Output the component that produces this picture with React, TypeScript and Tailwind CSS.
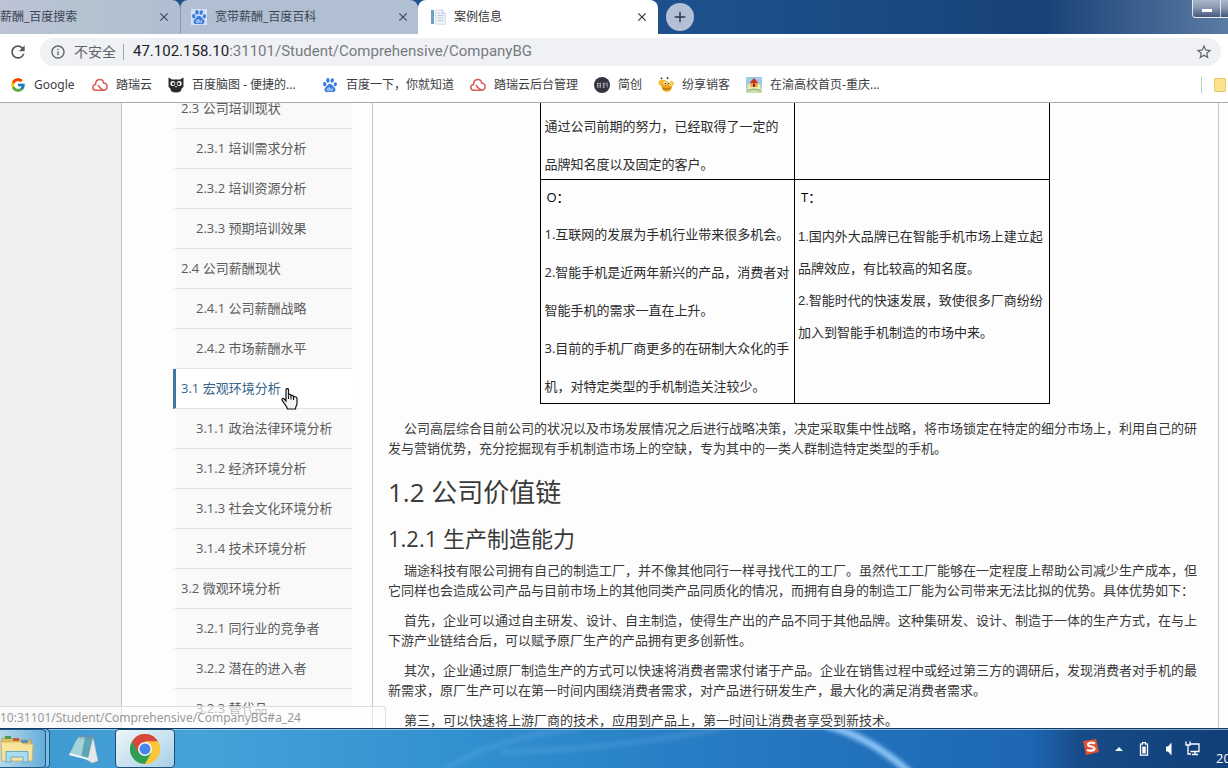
import type { ReactNode } from 'react';
import { FcGoogle } from 'react-icons/fc';
import { MdAdd, MdClose, MdInfoOutline, MdRefresh, MdStarBorder } from 'react-icons/md';

const uiFont = "font-['Open_Sans','Noto_Sans_CJK_SC',sans-serif]";

const navItems = [
  { label: '2.3 公司培训现状', level: 1 },
  { label: '2.3.1 培训需求分析', level: 2 },
  { label: '2.3.2 培训资源分析', level: 2 },
  { label: '2.3.3 预期培训效果', level: 2 },
  { label: '2.4 公司薪酬现状', level: 1 },
  { label: '2.4.1 公司薪酬战略', level: 2 },
  { label: '2.4.2 市场薪酬水平', level: 2 },
  { label: '3.1 宏观环境分析', level: 1, active: true },
  { label: '3.1.1 政治法律环境分析', level: 2 },
  { label: '3.1.2 经济环境分析', level: 2 },
  { label: '3.1.3 社会文化环境分析', level: 2 },
  { label: '3.1.4 技术环境分析', level: 2 },
  { label: '3.2 微观环境分析', level: 1 },
  { label: '3.2.1 同行业的竞争者', level: 2 },
  { label: '3.2.2 潜在的进入者', level: 2 },
  { label: '3.2.3 替代品', level: 2 },
];

function PawIcon({ boxed = false }: { boxed?: boolean }) {
  return (
    <svg viewBox="0 0 16 16" className="size-4 shrink-0">
      {boxed && <rect width="16" height="16" fill="#d3e2f6" />}
      <g fill="#3a7be0">
        <ellipse cx="2.8" cy="7.2" rx="1.7" ry="2.2" transform="rotate(-12 2.8 7.2)" />
        <ellipse cx="5.9" cy="3.4" rx="1.7" ry="2.3" />
        <ellipse cx="10.2" cy="3.5" rx="1.7" ry="2.3" transform="rotate(12 10.2 3.5)" />
        <ellipse cx="13.3" cy="7.3" rx="1.6" ry="2.1" transform="rotate(12 13.3 7.3)" />
        <path d="M8 6.8c-1.8 0-2.3 1.6-3.4 2.6C3.3 10.5 2.3 11.4 2.5 13c.3 1.9 1.9 2.3 3.3 2.1 1.5-.2 2.9-.2 4.4 0 1.5.2 3-.2 3.3-2 .2-1.7-.9-2.5-2.1-3.6C10.2 8.4 9.8 6.8 8 6.8z" />
      </g>
      <path d="M7.3 10v3.700H6.200c-1.600 0-1.600-2.300 0-2.300h1M8.700 11.300v1.700c0 .9 1.900.9 1.900 0v-1.700" fill="none" stroke="#e8f1fd" strokeWidth=".8" />
    </svg>
  );
}

function CloudIcon() {
  return (
    <svg viewBox="0 0 16 16" className="size-4 shrink-0" fill="none" stroke="#d95b57" strokeWidth="1.5" strokeLinecap="round">
      <path d="M4 13.200c-4.200.1-4.200-5.600-.4-5.700C3.500 1.500 10.800.8 11.600 6c4.600.4 4.600 7 .2 7.200H4" />
      <path d="M11.800 13.200C9.500 13 8.200 11 6.200 8.500" />
    </svg>
  );
}

function OwlIcon() {
  return (
    <svg viewBox="0 0 16 16" className="size-4 shrink-0">
      <path d="M.5.5 4 2.500h8l3.500-2V9c0 1.500-1.500 2-2 3 0 2.500-2.500 3.500-5.500 3.500S2.500 14.500 2.500 12c-.5-1-2-1.500-2-3z" fill="#2b2b2d" />
      <circle cx="4.800" cy="6.500" r="2.500" fill="#f4f4f4" />
      <circle cx="11.200" cy="6.500" r="2.500" fill="#f4f4f4" />
      <circle cx="5.300" cy="6.700" r="1.300" fill="#222" />
      <circle cx="10.700" cy="6.700" r="1.300" fill="#222" />
      <path d="M7 9h2l-1 2z" fill="#ddd" />
    </svg>
  );
}

function DiscIcon() {
  return (
    <svg viewBox="0 0 16 16" className="size-4 shrink-0">
      <circle cx="8" cy="8" r="8" fill="#33343f" />
      <path d="M3 6.500h4M3 8.200h4M3 10h4M3.500 5.500v5M6.500 5.500v5M8.500 6.500h2.500M8.500 8.200h2.500M8.500 10.300h2.500M9.700 5.500v5M12 5.500v3M13.300 5.500v5" stroke="#b9bac4" strokeWidth=".7" fill="none" />
    </svg>
  );
}

function BeeIcon() {
  return (
    <svg viewBox="0 0 16 16" className="size-4 shrink-0">
      <ellipse cx="5.500" cy="6.500" rx="5.300" ry="3.600" fill="#f3bd2c" transform="rotate(20 5.500 6.500)" />
      <ellipse cx="8.800" cy="10" rx="5.200" ry="4.800" fill="#eda61d" />
      <ellipse cx="13.500" cy="6.500" rx="2.400" ry="2.700" fill="#f6cf55" />
      <circle cx="7" cy="6.300" r="1.500" fill="#fff" />
      <circle cx="10.800" cy="6" r="1.400" fill="#fff" />
      <circle cx="7.300" cy="6.500" r=".8" fill="#40301a" />
      <circle cx="10.600" cy="6.300" r=".8" fill="#40301a" />
      <path d="M5 11c2 1.600 5 1.600 7.500-.3" stroke="#8a5a12" fill="none" />
      <circle cx="3.500" cy="1.300" r=".9" fill="#40301a" />
      <circle cx="9.500" cy="1" r=".9" fill="#40301a" />
    </svg>
  );
}

function SchoolIcon() {
  return (
    <svg viewBox="0 0 16 16" className="size-4 shrink-0">
      <rect width="16" height="16" fill="#9fcbe6" />
      <path d="M1.500 12V8l3-1.500h7l3 1.500v4z" fill="#f6e9ad" />
      <path d="M4 5.500 8 1l4 4.500v1H4z" fill="#c2352c" />
      <rect x="4.500" y="6" width="7" height="4" fill="#e9a23c" />
      <path d="M0 11.500c4 2 12 2 16 0V16H0z" fill="#cfe0b0" />
      <path d="M1 14.500c4-3 10-3 14 0" stroke="#7fb06a" fill="none" />
      <rect x="7" y="6.500" width="2" height="3.500" fill="#8c2a22" />
    </svg>
  );
}

function DocIcon() {
  return (
    <svg viewBox="0 0 16 16" className="size-4 shrink-0">
      <rect x="1" y="1" width="3" height="14" fill="#6d9fc4" />
      <path d="M5.500.8H12l3.500 3.500v11h-10z" fill="#eef1f7" stroke="#c6cedd" strokeWidth=".6" />
      <path d="M12 .8v3.500h3.500M7.500 6.500h6M7.500 9h6M7.500 11.500h6M7.500 4h2.500" stroke="#b4bfd4" strokeWidth=".8" fill="none" />
    </svg>
  );
}

function ChromeIcon() {
  return (
    <svg viewBox="0 0 30 30" className="size-[30px]">
      <circle cx="15" cy="15" r="15" fill="#fbc636" />
      <path d="M15 15 2 7.500A15 15 0 0 1 28 7.500H15z" fill="#d9463a" />
      <path d="M2 7.500A15 15 0 0 0 15 30l6.500-11.200L15 15z" fill="#2f9e55" />
      <path d="M15 15V7.500h13A15 15 0 0 1 15 30l6.500-11.300z" fill="#fbc636" />
      <path d="M2 7.500 8.500 18.800 15 7.500 15 5z" fill="#d9463a" />
      <circle cx="15" cy="15" r="7" fill="#f5f7f8" />
      <circle cx="15" cy="15" r="5.500" fill="#4a86ea" />
    </svg>
  );
}

function FolderStackIcon() {
  return (
    <svg viewBox="0 0 34 30" className="h-[30px] w-[34px]">
      <path d="M2 4h9l2 2h18v20H2z" fill="#e5c25f" stroke="#b9933a" strokeWidth=".7" />
      <path d="M5 2h6v3H5z" fill="#4d9a5a" />
      <path d="M13 4h6v3h-6z" fill="#c95a43" />
      <path d="M21 6h7v3h-7z" fill="#5a8fc4" />
      <path d="M1 8h20l2 2h10l-1 17H2z" fill="#f8e59b" stroke="#cdaa50" strokeWidth=".7" />
      <path d="M6 28V17.500h22V28h-5v-5H11v5z" fill="#a9dcf1" stroke="#5ba5cc" strokeWidth=".9" />
    </svg>
  );
}

function NotepadIcon() {
  return (
    <svg viewBox="0 0 32 30" className="h-[30px] w-8">
      <path d="m26 3 5 24-6 2-8-5z" fill="#e4e8ea" stroke="#aab7bd" strokeWidth=".5" />
      <path d="M11 3h15l-5 22L2 21z" fill="#5fa5b5" />
      <path d="M11 3h7l-4 20.500L2 21z" fill="#a5d3da" />
      <path d="m2 21 19 5 .5-2L3 19z" fill="#eef5f6" />
      <path d="M11 1v4M14 1v4M17 1v4M20 1v4M23 1v4M26 1v4" stroke="#7c8a92" />
    </svg>
  );
}

function HandCursor() {
  return (
    <svg viewBox="0 0 17 22" className="absolute top-[19px] left-[108px] z-10 h-[22px] w-[17px]">
      <path
        d="M5 1.800c0-1.700 2.500-1.700 2.500 0v5.400c.2-1.300 2.500-1.200 2.500.3v.6c.3-1.200 2.500-1 2.500.5v.8c.5-1.200 3.500-.9 3.500 1v5c0 2-1.500 3-1.500 5.600H6.500C6.300 18.500 3 15.500 1.300 12.500.3 10.700 2 9.800 3.200 11L5 13z"
        fill="#f4f4f4"
        stroke="#111"
        strokeWidth="1.2"
      />
      <path d="M7.500 7.500v3.500M10 8v3.500M12.500 9v3" stroke="#111" strokeWidth="1.1" />
    </svg>
  );
}

function Bookmark({ icon, label, width = '' }: { icon: ReactNode; label: string; width?: string }) {
  return (
    <a href="#" className="flex shrink-0 items-center gap-2">
      {icon}
      <span className={width}>{label}</span>
    </a>
  );
}

function TabStrip() {
  return (
    <div className="flex h-[34px] shrink-0 overflow-hidden bg-gradient-to-r from-[#1d4f8b] from-60% via-[#174277] via-85% to-[#5b7ba3] text-[12px] text-[#3c4654]">
      <div className="flex w-[180px] shrink-0 items-center justify-between rounded-tr-lg bg-gradient-to-r from-[#bcc3d6] via-[#b3c3d0] to-[#b1bdd2] pr-[9px]">
        <span>薪酬_百度搜索</span>
        <button type="button" aria-label="关闭标签页"><MdClose className="size-3.5" /></button>
      </div>
      <div className="flex w-[238px] shrink-0 items-center gap-2 rounded-t-lg border-l border-[#8d9ab0] bg-[#b1bfd3] pr-2 pl-[10px]">
        <PawIcon boxed />
        <span>宽带薪酬_百度百科</span>
        <button type="button" aria-label="关闭标签页" className="ml-auto"><MdClose className="size-3.5" /></button>
      </div>
      <div className="flex w-[240px] shrink-0 items-center gap-2 rounded-t-lg bg-white pr-[9px] pl-3 text-[#333]">
        <DocIcon />
        <span>案例信息</span>
        <button type="button" aria-label="关闭标签页" className="ml-auto"><MdClose className="size-3.5" /></button>
      </div>
      <button type="button" aria-label="新标签页" className="mt-[3px] ml-2 grid size-7 shrink-0 place-items-center rounded-full bg-[#b4c0d6] text-[#2d3747]">
        <MdAdd className="size-[18px]" />
      </button>
      <div className="ml-auto flex h-[18px] w-9 shrink-0 rounded-bl border-b border-l border-white/80 bg-gradient-to-b from-[#a9b6ca] via-[#8b9ab3] via-45% to-[#42597c]">
        <button type="button" aria-label="最小化" className="flex w-7 items-end justify-center border-r border-white/70 pb-[5px]">
          <span className="h-[3px] w-[10px] bg-white" />
        </button>
      </div>
    </div>
  );
}

function BrowserBar() {
  return (
    <div className="shrink-0 border-b border-[#aaa] bg-white">
      <div className="flex h-[35px] items-center pr-[7px] pl-2">
        <button type="button" aria-label="刷新" className="mr-3 text-[#555a60]"><MdRefresh className="size-5" /></button>
        <div className="flex h-7 flex-1 items-center rounded-full bg-[#eff1f5] pr-2 pl-[10px] text-[14px]">
          <MdInfoOutline className="size-4 text-[#5f6368]" />
          <span className="ml-2 text-[#5f6368]">不安全</span>
          <span className="ml-[7px] h-4 w-px bg-[#a0a4a8]" />
          <span className="ml-[9px] font-['Roboto',sans-serif] text-[15px] text-[#777b80]">
            <span className="text-[#222]">47.102.158.10</span>:31101/Student/Comprehensive/CompanyBG
          </span>
          <button type="button" aria-label="收藏" className="ml-auto text-[#5f6368]"><MdStarBorder className="size-[18px]" /></button>
        </div>
      </div>
      <div className="flex h-[33px] items-center gap-4 overflow-hidden pb-[2px] pl-[10px] font-['Noto_Sans','Noto_Sans_CJK_SC',sans-serif] text-[12px] text-[#3c4043]">
        <Bookmark icon={<FcGoogle className="size-4 shrink-0" />} label="Google" width="w-[42px]" />
        <Bookmark icon={<CloudIcon />} label="踏瑞云" />
        <Bookmark icon={<OwlIcon />} label="百度脑图 - 便捷的..." width="w-[114px]" />
        <Bookmark icon={<PawIcon />} label="百度一下，你就知道" />
        <Bookmark icon={<CloudIcon />} label="踏瑞云后台管理" />
        <Bookmark icon={<DiscIcon />} label="简创" />
        <Bookmark icon={<BeeIcon />} label="纷享销客" />
        <Bookmark icon={<SchoolIcon />} label="在渝高校首页-重庆..." />
        <span className="ml-auto flex shrink-0 items-center gap-3 pr-[2px]">
          <span className="h-4 w-px bg-[#b9ccc0]" />
          <span className="h-[14px] w-3 rounded-[1px] border border-[#e3c566] bg-[#fbe28c]" />
        </span>
      </div>
    </div>
  );
}

function SideNav() {
  return (
    <nav className="-mt-[14px] ml-[51px] w-[179px] shrink-0 text-[13px] text-[#5c5c5c]">
      {navItems.map((item) => (
        <div key={item.label} className="relative">
          <a
            href="#"
            className={`flex h-10 items-center border-b border-l-[3px] border-b-[#e2e2e2] ${
              item.active ? 'border-l-[#41799c] bg-white text-[#35648d]' : 'border-l-transparent bg-[#f9f9f9] bg-clip-padding'
            } ${item.level === 1 ? 'pl-[5px]' : 'pl-5'}`}
          >
            {item.label}
          </a>
          {item.active && <HandCursor />}
        </div>
      ))}
    </nav>
  );
}

function SwotTable() {
  return (
    <table className="mx-auto w-[510px] table-fixed border-collapse text-[13px] text-[#2c2c2c]">
      <tbody>
        <tr className="align-top">
          <td className="border border-t-0 border-black pt-1 pr-[3px] pl-1">
            <p className="-mb-1 leading-[38px]">通过公司前期的努力，已经取得了一定的品牌知名度以及固定的客户。</p>
          </td>
          <td className="border border-t-0 border-black" />
        </tr>
        <tr className="align-top">
          <td className="border border-black p-0 pr-[3px] pl-1">
            <p className="pl-[2px] leading-[35px] text-black">O：</p>
            <div className="-mb-[2px] leading-[38px]">
              <p>1.互联网的发展为手机行业带来很多机会。</p>
              <p>2.智能手机是近两年新兴的产品，消费者对智能手机的需求一直在上升。</p>
              <p>3.目前的手机厂商更多的在研制大众化的手机，对特定类型的手机制造关注较少。</p>
            </div>
          </td>
          <td className="border border-black p-0 px-[3px]">
            <p className="pl-[3px] leading-[35px] text-black">T：</p>
            <div className="mt-[6px] font-['Liberation_Sans','Noto_Sans_CJK_SC',sans-serif] leading-8">
              <p>1.国内外大品牌已在智能手机市场上建立起品牌效应，有比较高的知名度。</p>
              <p>2.智能时代的快速发展，致使很多厂商纷纷加入到智能手机制造的市场中来。</p>
            </div>
          </td>
        </tr>
      </tbody>
    </table>
  );
}

function Article() {
  return (
    <main className="min-w-0 flex-1 border-l border-[#c4c4c4] pr-[17px] pl-[15px] text-[#3a3a3a]">
      <SwotTable />
      <div className="mt-[14px] text-[13px] leading-5">
        <p className="indent-4">
          公司高层综合目前公司的状况以及市场发展情况之后进行战略决策，决定采取集中性战略，将市场锁定在特定的细分市场上，利用自己的研发与营销优势，充分挖掘现有手机制造市场上的空缺，专为其中的一类人群制造特定类型的手机。
        </p>
        <h2 className="mt-5 text-[26px] leading-7">1.2 公司价值链</h2>
        <h3 className="mt-5 mb-[10px] text-[22px] leading-6">1.2.1 生产制造能力</h3>
        <div className="space-y-[10px] indent-4">
          <p>
            瑞途科技有限公司拥有自己的制造工厂，并不像其他同行一样寻找代工的工厂。虽然代工工厂能够在一定程度上帮助公司减少生产成本，但它同样也会造成公司产品与目前市场上的其他同类产品同质化的情况，而拥有自身的制造工厂能为公司带来无法比拟的优势。具体优势如下：
          </p>
          <p>
            首先，企业可以通过自主研发、设计、自主制造，使得生产出的产品不同于其他品牌。这种集研发、设计、制造于一体的生产方式，在与上下游产业链结合后，可以赋予原厂生产的产品拥有更多创新性。
          </p>
          <p>
            其次，企业通过原厂制造生产的方式可以快速将消费者需求付诸于产品。企业在销售过程中或经过第三方的调研后，发现消费者对手机的最新需求，原厂生产可以在第一时间内围绕消费者需求，对产品进行研发生产，最大化的满足消费者需求。
          </p>
          <p>第三，可以快速将上游厂商的技术，应用到产品上，第一时间让消费者享受到新技术。</p>
        </div>
      </div>
    </main>
  );
}

function Taskbar() {
  return (
    <footer className="relative flex h-10 shrink-0 items-center overflow-hidden border-t border-[#123a63] bg-[#2c84c8] text-white">
      <svg viewBox="0 0 1228 40" preserveAspectRatio="none" className="absolute inset-0 size-full">
        <defs>
          <linearGradient id="bar">
            <stop offset="0" stopColor="#3c98cf" />
            <stop offset=".16" stopColor="#46a2d8" />
            <stop offset=".38" stopColor="#3190cf" />
            <stop offset=".6" stopColor="#2679c2" />
            <stop offset=".84" stopColor="#1d66b3" />
            <stop offset=".88" stopColor="#174b87" />
            <stop offset="1" stopColor="#113e77" />
          </linearGradient>
          <filter id="glow"><feGaussianBlur stdDeviation="2" /></filter>
        </defs>
        <rect width="1228" height="40" fill="url(#bar)" />
        <g filter="url(#glow)" fill="none" stroke="#8cc4f5">
          <path d="M825-4q46 12 86 50" strokeWidth="7" />
          <path d="M440 44q50-34 140-46M500 24q100-2 220-24" strokeWidth="5" opacity=".2" />
        </g>
        <path d="M0 .5h1228" stroke="#b9d9ee" opacity=".7" />
      </svg>
      <div className="relative flex h-full items-stretch">
        <button type="button" aria-label="资源管理器" className="flex w-[46px] items-center rounded-r border border-l-0 border-[#1e5b87] bg-gradient-to-r from-[#b5d9ea] to-[#63aeda]">
          <FolderStackIcon />
        </button>
        <span className="w-1 rounded-r border border-l-0 border-[#1e5b87] bg-[#7dbce0]" />
        <button type="button" aria-label="记事本" className="flex w-[65px] items-center justify-center"><NotepadIcon /></button>
        <button type="button" aria-label="Chrome" className="flex w-[60px] items-center justify-center rounded border border-[#1b4f79] bg-gradient-to-br from-[#eef6fa] to-[#a8d0e6]">
          <ChromeIcon />
        </button>
      </div>
      <div className="relative ml-auto flex h-full items-center">
        <svg viewBox="0 0 16 16" className="mb-1 size-4">
          <path d="m0 2 13-2 3 13-13 3z" fill="#e2512f" />
          <path d="M12 4.500C9 3 4.500 3.500 5 6c.4 2 6.300 1 6.500 3.500.2 2.200-4.500 2.800-7.500 1.500" stroke="#fff" strokeWidth="2.2" fill="none" />
        </svg>
        <svg viewBox="0 0 8 4" className="ml-4 h-1 w-2"><path d="M0 4 4 0l4 4z" fill="#eef4fa" /></svg>
        <svg viewBox="0 0 10 14" className="ml-4 h-[14px] w-[10px]">
          <path d="M3.500.7h3v1.500h2v11h-7v-11h2z" fill="none" stroke="#fff" strokeWidth="1.3" />
          <path d="M3.300 4.500h3.400v7H3.300z" fill="#fff" />
        </svg>
        <svg viewBox="0 0 8 14" className="ml-4 h-[14px] w-2"><path d="M1 4.500h2L6.500.5v13L3 9.500H1z" fill="#fff" /></svg>
        <svg viewBox="0 0 15 15" className="ml-3 size-[15px]" fill="none" stroke="#fff" strokeWidth="1.3">
          <path d="M5.500 3H14v7.500H5.500M7 13.500h6M10 10.500v3M1 .5v3.500h4V.5M3 4v9h3" />
        </svg>
        <time className="ml-4 w-3 self-end overflow-hidden text-[13px] leading-5 whitespace-nowrap">20</time>
      </div>
    </footer>
  );
}

export default function App() {
  return (
    <div className={`flex h-screen flex-col overflow-hidden bg-white ${uiFont}`}>
      <TabStrip />
      <BrowserBar />
      <div className="relative flex min-h-0 flex-1 overflow-hidden bg-[#fdfdfd]">
        <div className="w-[121px] shrink-0 bg-[#f0f0f0]" />
        <div className="mr-[9px] flex min-w-0 flex-1 gap-5 border-x border-[#c4c4c4]">
          <SideNav />
          <Article />
        </div>
        <div className="absolute bottom-0 left-0 h-[22px] w-[386px] rounded-tr border-t border-r border-[#ddd] bg-white/60 font-['Noto_Sans',sans-serif] text-[12px] leading-[22px] text-[#999]">
          10:31101/Student/Comprehensive/CompanyBG#a_24
        </div>
      </div>
      <Taskbar />
    </div>
  );
}
